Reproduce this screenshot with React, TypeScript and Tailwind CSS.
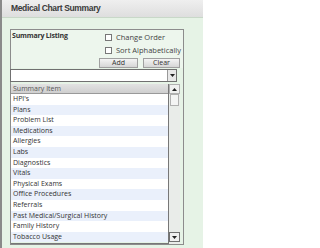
import React from "react";

const items = [
  "HPI's",
  "Plans",
  "Problem List",
  "Medications",
  "Allergies",
  "Labs",
  "Diagnostics",
  "Vitals",
  "Physical Exams",
  "Office Procedures",
  "Referrals",
  "Past Medical/Surgical History",
  "Family History",
  "Tobacco Usage",
];

function Arrow({ up }: { up?: boolean }) {
  return (
    <svg width="5" height="3" viewBox="0 0 5 3">
      {up ? <path d="M0 3 L2.5 0 L5 3 Z" fill="#222" /> : <path d="M0 0 L5 0 L2.5 3 Z" fill="#222" />}
    </svg>
  );
}

export default function App() {
  return (
    <div
      className="w-[203px] h-[248px] bg-[#e6f3e6] border-l-2 border-[#8a8a8a] flex flex-col overflow-hidden text-[#333]"
      style={{ fontFamily: "'Open Sans', 'Noto Sans', sans-serif" }}
    >
      <div className="h-[18px] shrink-0 bg-gradient-to-b from-[#efefef] to-[#dedede] border-b border-[#c8d8c8] flex items-center pl-[9px]">
        <span
          className="text-[8.5px] font-bold text-[#3a3a3a] tracking-[-0.35px]"
          style={{ fontFamily: "'Liberation Sans', Arial, sans-serif" }}
        >
          Medical Chart Summary
        </span>
      </div>
      <div className="pt-[11px] pl-[8px]">
        <div className="w-[174px] h-[216px] border border-[#8c8c8c] flex flex-col">
          <div className="h-[38px] flex bg-[#edf6ed]">
            <div className="pl-[1px] pt-[1px] text-[7px] font-bold text-[#333] tracking-[-0.2px] w-[88px]">Summary Listing</div>
            <div className="flex flex-col pl-[6px] pt-[2px]">
              <div className="flex items-center h-[14px] -mt-[1px]">
                <div className="w-[7px] h-[7px] border border-[#777] bg-white mr-[4px]" />
                <span className="text-[7.5px] text-[#444]">Change Order</span>
              </div>
              <div className="flex items-center h-[14px]">
                <div className="w-[7px] h-[7px] border border-[#777] bg-white mr-[4px]" />
                <span className="text-[7.5px] text-[#444]">Sort Alphabetically</span>
              </div>
              <div className="flex gap-[5px] -ml-[6px] mt-[1px]">
                <div className="w-[39px] h-[10px] bg-gradient-to-b from-[#f4f4f4] to-[#d6d6d6] border border-[#a0a0a0] flex items-center justify-center text-[7px] text-[#333]">Add</div>
                <div className="w-[37px] h-[10px] bg-gradient-to-b from-[#f4f4f4] to-[#d6d6d6] border border-[#a0a0a0] flex items-center justify-center text-[7px] text-[#333]">Clear</div>
              </div>
            </div>
          </div>
          <div className="h-[13px] w-[167px] -ml-px mt-[1px] border border-[#707070] bg-white flex justify-end">
            <div className="w-[9px] h-full border-l border-[#999] bg-[#e8e8e8] flex items-center justify-center">
              <Arrow />
            </div>
          </div>
          <div className="mt-[2px] flex flex-1">
            <div className="w-[158px] border-r border-[#777] border-b flex flex-col">
              <div className="h-[10px] bg-gradient-to-b from-[#e2e2e2] to-[#cfcfcf] border-b border-[#999] text-[7px] text-[#555] pl-[2px] leading-[10px]">Summary Item</div>
              {items.map((t, i) => (
                <div
                  key={t}
                  className={`h-[10.6px] text-[7px] leading-[10.6px] pl-[2px] text-[#333] ${i % 2 === 0 ? "bg-white" : "bg-[#eaf0fb]"}`}
                >
                  {t}
                </div>
              ))}
            </div>
            <div className="w-[11px] flex flex-col bg-[#e9ece9] pb-[2px]">
              <div className="h-[10px] border border-[#b0b0b0] bg-[#f0f0f0] flex items-center justify-center">
                <Arrow up />
              </div>
              <div className="h-[12px] border border-[#b0b0b0] bg-[#f4f4f4] mx-[1px]" />
              <div className="flex-1" />
              <div className="h-[10px] border border-[#707070] bg-[#f0f0f0] flex items-center justify-center">
                <Arrow />
              </div>
            </div>
          </div>
        </div>
      </div>
    </div>
  );
}
